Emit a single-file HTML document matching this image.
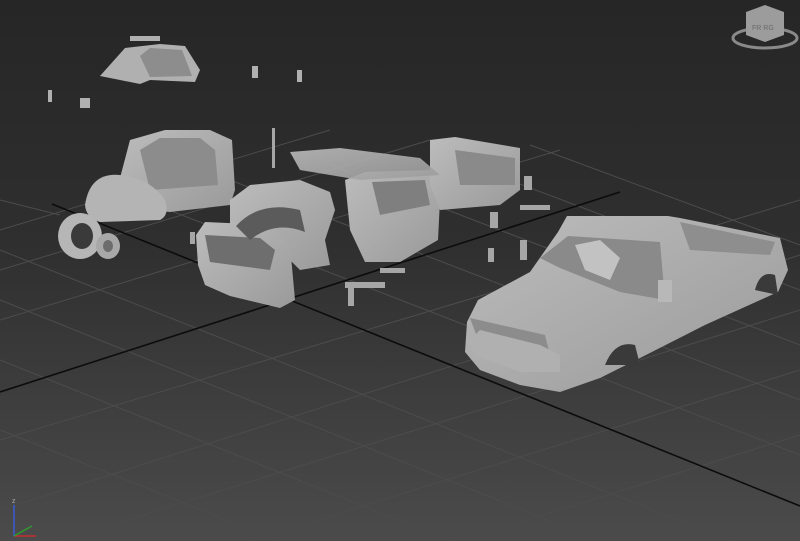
<!DOCTYPE html>
<html><head><style>
html,body{margin:0;padding:0;width:800px;height:541px;overflow:hidden;background:#333}
svg{display:block}
</style></head><body>
<svg width="800" height="541" viewBox="0 0 800 541" xmlns="http://www.w3.org/2000/svg">
<defs>
<linearGradient id="bg" x1="0" y1="0" x2="0" y2="1">
<stop offset="0" stop-color="#262626"/>
<stop offset="0.45" stop-color="#2f2f2f"/>
<stop offset="1" stop-color="#4b4b4b"/>
</linearGradient>
<linearGradient id="body" x1="0" y1="0" x2="1" y2="1">
<stop offset="0" stop-color="#bcbcbc"/>
<stop offset="1" stop-color="#9a9a9a"/>
</linearGradient>
</defs>
<rect width="800" height="541" fill="url(#bg)"/>
<g stroke="#4c4c4c" stroke-width="1" fill="none">
<!-- family A: slope ~ -0.33 -->
<line x1="0" y1="230" x2="330" y2="130"/>
<line x1="0" y1="270" x2="430" y2="140"/>
<line x1="0" y1="320" x2="560" y2="150"/>
<line x1="0" y1="440" x2="800" y2="200"/>
<line x1="0" y1="510" x2="800" y2="255"/>
<line x1="60" y1="541" x2="800" y2="310"/>
<line x1="250" y1="541" x2="800" y2="370"/>
<line x1="460" y1="541" x2="800" y2="435"/>
<!-- family B: slope ~ +0.4 -->
<line x1="0" y1="215" x2="800" y2="530" opacity="0"/>
<line x1="0" y1="250" x2="730" y2="541"/>
<line x1="0" y1="300" x2="600" y2="541"/>
<line x1="0" y1="360" x2="450" y2="541"/>
<line x1="0" y1="430" x2="280" y2="541"/>
<line x1="130" y1="195" x2="800" y2="455"/>
<line x1="230" y1="180" x2="800" y2="400"/>
<line x1="330" y1="165" x2="800" y2="345"/>
<line x1="430" y1="150" x2="800" y2="290"/>
<line x1="530" y1="145" x2="800" y2="245"/>
<line x1="0" y1="200" x2="60" y2="215"/>
</g>
<!-- main axis lines -->
<g stroke="#0c0c0c" stroke-width="1.6">
<line x1="0" y1="392" x2="620" y2="192"/>
<line x1="52" y1="204" x2="800" y2="506"/>
</g>

<!-- top roof pieces -->
<g fill="#b0b0b0">
<path d="M100 76 L125 48 L160 44 L185 46 L200 70 L195 82 L150 80 L140 84 L120 80 Z"/>
<rect x="130" y="36" width="30" height="5"/>
<rect x="252" y="66" width="6" height="12"/>
<rect x="297" y="70" width="5" height="12"/>
<rect x="80" y="98" width="10" height="10"/>
<rect x="48" y="90" width="4" height="12"/>
</g>
<path d="M140 56 L150 48 L182 50 L192 76 L150 77 Z" fill="#8d8d8d"/>

<!-- left cab -->
<path d="M120 178 L130 140 L165 130 L210 130 L232 140 L235 190 L230 205 L170 212 L150 210 Z" fill="url(#body)"/>
<path d="M140 150 L160 138 L200 138 L215 150 L218 185 L150 190 Z" fill="#8c8c8c"/>
<path d="M85 205 Q90 172 120 175 Q150 178 165 200 Q170 215 160 220 L100 222 Q86 218 85 205Z" fill="#b4b4b4"/>
<!-- tire -->
<ellipse cx="80" cy="236" rx="22" ry="23" fill="#b6b6b6"/>
<ellipse cx="82" cy="236" rx="11" ry="13" fill="#3a3a3a"/>
<ellipse cx="108" cy="246" rx="12" ry="13" fill="#a8a8a8"/>
<ellipse cx="108" cy="246" rx="5" ry="6" fill="#6d6d6d"/>

<!-- middle exploded truck -->
<g fill="url(#body)">
<path d="M230 200 L250 185 L300 180 L330 192 L335 210 L325 240 L330 265 L300 270 L270 240 L230 225 Z"/>
<path d="M196 235 L205 222 L270 225 L290 245 L295 300 L280 308 L230 296 L205 285 L198 265 Z"/>
<path d="M345 180 L365 172 L430 170 L440 200 L438 240 L400 262 L365 262 L350 230 Z"/>
<path d="M430 140 L455 137 L520 148 L520 190 L500 205 L440 210 L430 185 Z"/>
<path d="M290 152 L340 148 L420 158 L440 175 L360 180 L300 170 Z" opacity="0.9"/>
</g>
<path d="M205 235 L260 238 L275 250 L270 270 L210 262 Z" fill="#6e6e6e"/>
<path d="M236 226 Q260 200 300 210 L305 232 Q275 220 250 240 Z" fill="#5b5b5b"/>
<path d="M372 182 L425 180 L430 205 L380 215 Z" fill="#7f7f7f"/>
<path d="M455 150 L515 158 L515 185 L460 185 Z" fill="#8a8a8a"/>
<g fill="#a6a6a6">
<rect x="345" y="282" width="40" height="6"/>
<rect x="348" y="284" width="6" height="22"/>
<rect x="272" y="128" width="3" height="40"/>
<rect x="380" y="268" width="25" height="5"/>
<rect x="520" y="205" width="30" height="5"/>
<rect x="490" y="212" width="8" height="16"/>
<rect x="520" y="240" width="7" height="20"/>
<rect x="488" y="248" width="6" height="14"/>
<rect x="524" y="176" width="8" height="14"/>
<rect x="190" y="232" width="5" height="12"/>
</g>

<!-- right truck -->
<path d="M465 352 L467 322 L478 300 L530 272 L558 232 L567 216 L668 216 L680 218 L780 238 L788 270 L778 292 L705 325 L640 358 L600 378 L560 392 L520 385 L480 370 Z" fill="url(#body)"/>
<path d="M680 222 L775 242 L770 255 L690 250 Z" fill="#8e8e8e"/>
<path d="M540 258 L568 236 L660 242 L665 300 L620 292 L560 268 Z" fill="#8a8a8a"/>
<path d="M575 245 L600 240 L620 258 L610 280 L585 270 Z" fill="#c2c2c2"/>
<path d="M470 318 L545 335 L550 355 L480 345 Z" fill="#8c8c8c"/>
<path d="M470 340 L480 330 L540 345 L560 355 L560 372 L520 372 L475 355 Z" fill="#b0b0b0"/>
<path d="M605 365 Q615 340 635 345 L640 365 Z" fill="#3a3a3a"/>
<path d="M755 290 Q760 270 775 275 L778 295 Z" fill="#3a3a3a"/>
<rect x="658" y="280" width="14" height="22" fill="#b8b8b8"/>

<!-- view cube -->
<ellipse cx="765" cy="38" rx="32" ry="10" fill="none" stroke="#8a8a8a" stroke-width="3"/>
<path d="M746 12 L765 5 L784 12 L784 35 L765 42 L746 35 Z" fill="#9c9c9c"/>
<text x="752" y="30" font-family="Liberation Sans, sans-serif" font-size="7" fill="#6a6a6a">FR RG</text>

<!-- axis tripod -->
<line x1="14" y1="505" x2="14" y2="536" stroke="#3b5bd6" stroke-width="1.5"/>
<line x1="14" y1="536" x2="36" y2="536" stroke="#c53030" stroke-width="1.5"/>
<line x1="14" y1="536" x2="32" y2="526" stroke="#2f9a2f" stroke-width="1.5"/>
<text x="12" y="503" font-family="Liberation Sans, sans-serif" font-size="7" fill="#aaa">z</text>
</svg>
</body></html>
